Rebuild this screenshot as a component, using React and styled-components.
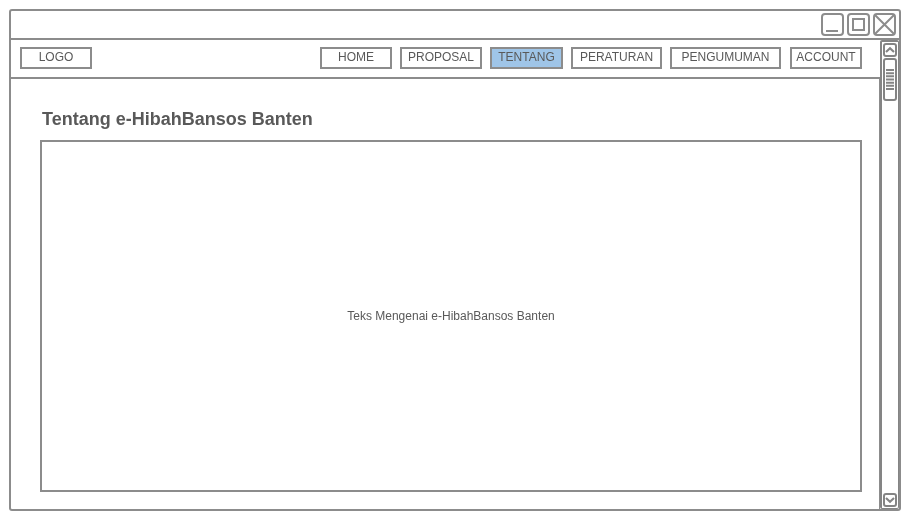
import React from "react";
import styled, { createGlobalStyle } from "styled-components";

const LINE = "#8c8c8c";
const SCROLL_LINE = "#848484";
const INK = "#595959";

const GlobalStyle = createGlobalStyle`
  *, *::before, *::after { box-sizing: border-box; }
  body {
    margin: 0;
    background: #fff;
    color: ${INK};
    font-family: "Liberation Sans", Arial, sans-serif;
    overflow: hidden;
  }
  svg { display: block; }
`;

const Page = styled.div`
  padding: 9px;
  height: 530px;
  will-change: transform;
`;

const Window = styled.div`
  width: 892px;
  height: 502px;
  border: 2px solid ${LINE};
  border-radius: 3px;
  display: flex;
  flex-direction: column;
`;

const TitleBar = styled.header`
  height: 29px;
  flex: none;
  border-bottom: 2px solid ${LINE};
  display: flex;
  justify-content: flex-end;
  gap: 3px;
  padding: 2px 3px 0 0;
`;

const WindowButton = styled.button`
  width: 23px;
  height: 23px;
  padding: 0;
  border: 2px solid ${LINE};
  border-radius: 4px;
  background: #fff;
`;

const Body = styled.div`
  flex: 1;
  min-height: 0;
  display: flex;
`;

const Main = styled.main`
  width: 869px;
  display: flex;
  flex-direction: column;
`;

const Nav = styled.nav`
  height: 39px;
  flex: none;
  border-bottom: 2px solid ${LINE};
  padding: 7px 18px 0 9px;
  display: flex;
`;

const NavBox = styled.a`
  width: ${(p) => p.$width}px;
  height: 22px;
  margin-left: ${(p) => p.$gap || 0}px;
  border: 2px solid ${LINE};
  background: ${(p) => (p.$active ? "#9fc5e8" : "#fff")};
  font-size: 12px;
  line-height: 16px;
  text-align: center;
  white-space: nowrap;
`;

const Links = styled.div`
  display: flex;
  margin-left: auto;
`;

const Content = styled.section`
  flex: 1;
  border-right: 1px solid ${LINE};
  padding: 28px 17px 17px 29px;
  display: flex;
  flex-direction: column;
`;

const Heading = styled.h1`
  margin: 0;
  padding-left: 2px;
  height: 33px;
  flex: none;
  font-size: 18px;
  line-height: 24px;
  font-weight: 700;
`;

const TextPanel = styled.div`
  flex: 1;
  border: 2px solid ${LINE};
  display: flex;
  align-items: center;
  justify-content: center;
  font-size: 12px;
  line-height: 16px;
`;

const ScrollBar = styled.aside`
  width: 19px;
  border: solid ${SCROLL_LINE};
  border-width: 2px 1px 1px 2px;
  border-radius: 2px;
  display: flex;
  flex-direction: column;
  align-items: center;
  padding: 1px 0;
`;

const Arrow = styled.button`
  width: 14px;
  height: 14px;
  flex: none;
  padding: 0;
  border: 2px solid ${SCROLL_LINE};
  border-radius: 3px;
  background: #fff;
`;

const Thumb = styled.div`
  width: 14px;
  height: 43px;
  margin: 1px 0 auto;
  padding-top: 9px;
  border: 2px solid ${SCROLL_LINE};
  border-radius: 3px;
  display: flex;
  justify-content: center;
`;

const links = [
  { label: "HOME", width: 72 },
  { label: "PROPOSAL", width: 82, gap: 8 },
  { label: "TENTANG", width: 73, gap: 8, active: true },
  { label: "PERATURAN", width: 91, gap: 8 },
  { label: "PENGUMUMAN", width: 111, gap: 8 },
  { label: "ACCOUNT", width: 72, gap: 9 },
];

const Glyph = ({ children }) => (
  <svg width="19" height="19" viewBox="0 0 19 19" fill="none" stroke={LINE} strokeWidth="2">
    {children}
  </svg>
);

const Chevron = ({ d }) => (
  <svg width="10" height="10" viewBox="0 0 10 10" fill="none" stroke={SCROLL_LINE} strokeWidth="2.1">
    <path d={d} />
  </svg>
);

export default function App() {
  return (
    <Page>
      <GlobalStyle />
      <Window>
        <TitleBar>
          <WindowButton aria-label="Minimize">
            <Glyph><path d="M3 16H15" /></Glyph>
          </WindowButton>
          <WindowButton aria-label="Maximize">
            <Glyph><rect x="4" y="4" width="11" height="11" /></Glyph>
          </WindowButton>
          <WindowButton aria-label="Close">
            <Glyph><path d="M0 0L19 19M19 0L0 19" /></Glyph>
          </WindowButton>
        </TitleBar>
        <Body>
          <Main>
            <Nav>
              <NavBox $width={72}>LOGO</NavBox>
              <Links>
                {links.map((l) => (
                  <NavBox key={l.label} $width={l.width} $gap={l.gap} $active={l.active}>
                    {l.label}
                  </NavBox>
                ))}
              </Links>
            </Nav>
            <Content>
              <Heading>Tentang e-HibahBansos Banten</Heading>
              <TextPanel>Teks Mengenai e-HibahBansos Banten</TextPanel>
            </Content>
          </Main>
          <ScrollBar>
            <Arrow aria-label="Scroll up"><Chevron d="M1 7L5 3.2L9 7" /></Arrow>
            <Thumb>
              <svg width="8" height="21" viewBox="0 0 8 21" stroke={SCROLL_LINE} strokeWidth="2">
                <path d="M0 1H8M0 4.17H8M0 7.33H8M0 10.5H8M0 13.67H8M0 16.83H8M0 20H8" />
              </svg>
            </Thumb>
            <Arrow aria-label="Scroll down"><Chevron d="M1 3L5 6.8L9 3" /></Arrow>
          </ScrollBar>
        </Body>
      </Window>
    </Page>
  );
}
